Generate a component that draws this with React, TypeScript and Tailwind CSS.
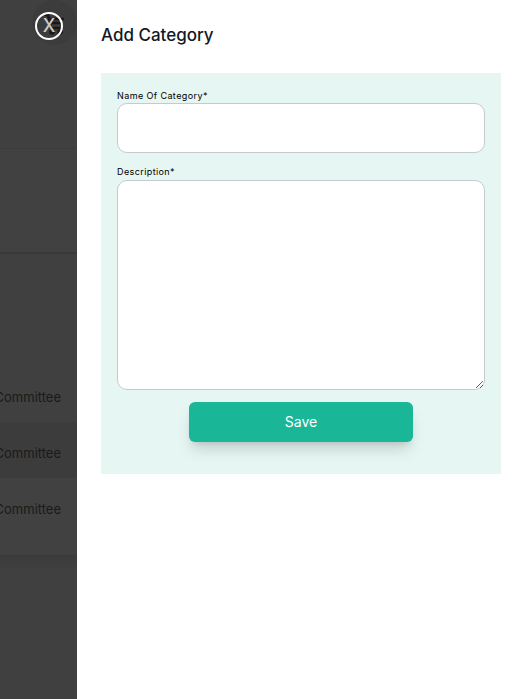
const rows = [
  { h: 'h-[56px]', bg: 'bg-[#404040]' },
  { h: 'h-[56px]', bg: 'bg-[#3c3c3c]' },
  { h: 'h-[77px]', bg: 'bg-[#414141]' },
];

export default function App() {
  return (
    <div className="flex h-[699px] w-[524px] overflow-hidden bg-white font-['Inter',sans-serif]">
      {/* 遮罩后面的页面 */}
      <div className="relative flex w-[77px] shrink-0 flex-col overflow-hidden bg-[#404040]">
        <div className="h-[149px] shrink-0 border-b border-[#3c3c3c]" />
        <div className="h-[105px] shrink-0 border-b-2 border-[#393939] bg-[#414141]" />
        <div className="h-[112px] shrink-0" />
        {rows.map((r, i) => (
          <div key={i} className={`${r.h} ${r.bg} flex shrink-0 justify-end pr-[16px] pt-[23px]`}>
            <span className="text-[13px] leading-[16px] whitespace-nowrap text-[#1a1a1a]">Committee</span>
          </div>
        ))}
        <div className="flex-1 bg-[#404040] bg-gradient-to-b from-[#3b3b3b] to-[#404040] to-[16px]" />

        {/* 关闭按钮 */}
        <div className="absolute left-[32px] top-[0px] h-[45px] w-[45px] rounded-full bg-[#3c3c3c]">
          <svg viewBox="0 0 24 24" fill="none" stroke="#181818" strokeWidth="2.4" className="absolute left-[10px] top-[12px] h-[24px] w-[24px]">
            <path d="M3 3h3l3 13h10" />
            <path d="M8 7h14M9 11h11" />
            <circle cx="10" cy="20" r="1.6" />
            <circle cx="18" cy="20" r="1.6" />
          </svg>
          <div className="absolute left-[3px] top-[12px] flex h-[28px] w-[28px] items-center justify-center rounded-full border-2 border-white text-[18px] leading-none font-medium text-[#c9c9c9]">
            X
          </div>
        </div>
      </div>

      {/* 抽屉 */}
      <div className="flex-1 px-[24px]">
        <h2 className="mt-[24px] text-[17px] leading-[22px] font-medium text-[#111827]">Add Category</h2>
        <form className="mt-[27px] w-[400px] bg-[#e6f6f2] px-[16px] pt-[16px] pb-[32px]">
          <label className="block text-[9px] leading-[14px] tracking-[0.4px] text-black">Name Of Category*</label>
          <input className="block h-[50px] w-full rounded-[10px] border border-[#c3cbd0] bg-white" />
          <label className="mt-[11px] block text-[9px] leading-[16px] tracking-[0.4px] text-black">Description*</label>
          <textarea className="block h-[210px] w-full rounded-[10px] border border-[#c3cbd0] bg-white" />
          <button
            type="button"
            className="mx-auto mt-[12px] block h-[40px] w-[224px] rounded-[6px] bg-[#19b697] pb-[1px] text-[14px] text-white shadow-lg shadow-black/15"
          >
            Save
          </button>
        </form>
      </div>
    </div>
  );
}
